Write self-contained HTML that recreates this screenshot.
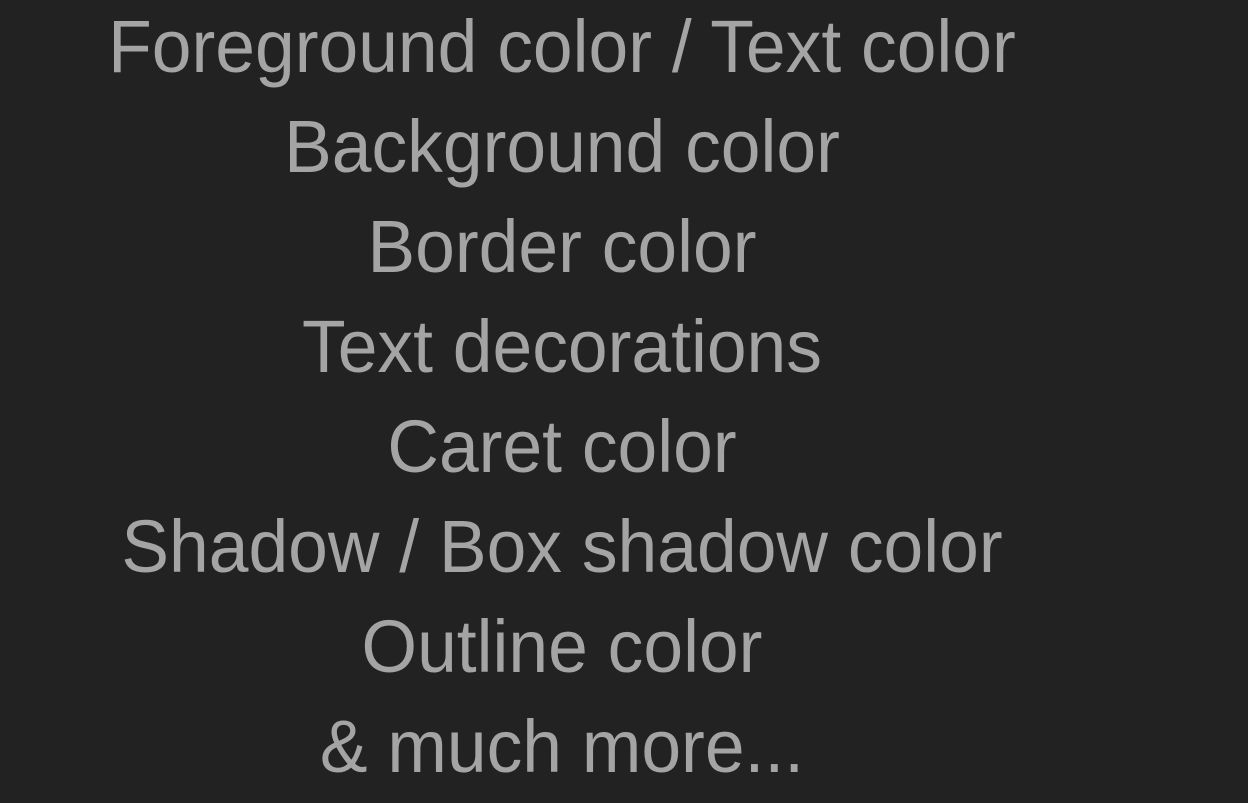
<!DOCTYPE html>
<html><head><meta charset="utf-8"><style>
html,body{margin:0;padding:0;background:#222222;width:1248px;height:803px;overflow:hidden}
.wrap{position:absolute;left:0;top:-3px;width:1124px}
.l{height:100px;line-height:100px;font-size:74px;font-family:"Liberation Sans",sans-serif;color:#a4a4a4;text-align:center;white-space:nowrap;transform:scaleX(0.965);transform-origin:562px 0;font-weight:400}
</style></head><body>
<div class="wrap">
<div class="l">Foreground color / Text color</div>
<div class="l">Background color</div>
<div class="l">Border color</div>
<div class="l">Text decorations</div>
<div class="l">Caret color</div>
<div class="l">Shadow / Box shadow color</div>
<div class="l">Outline color</div>
<div class="l">&amp; much more...</div>
</div>
</body></html>
